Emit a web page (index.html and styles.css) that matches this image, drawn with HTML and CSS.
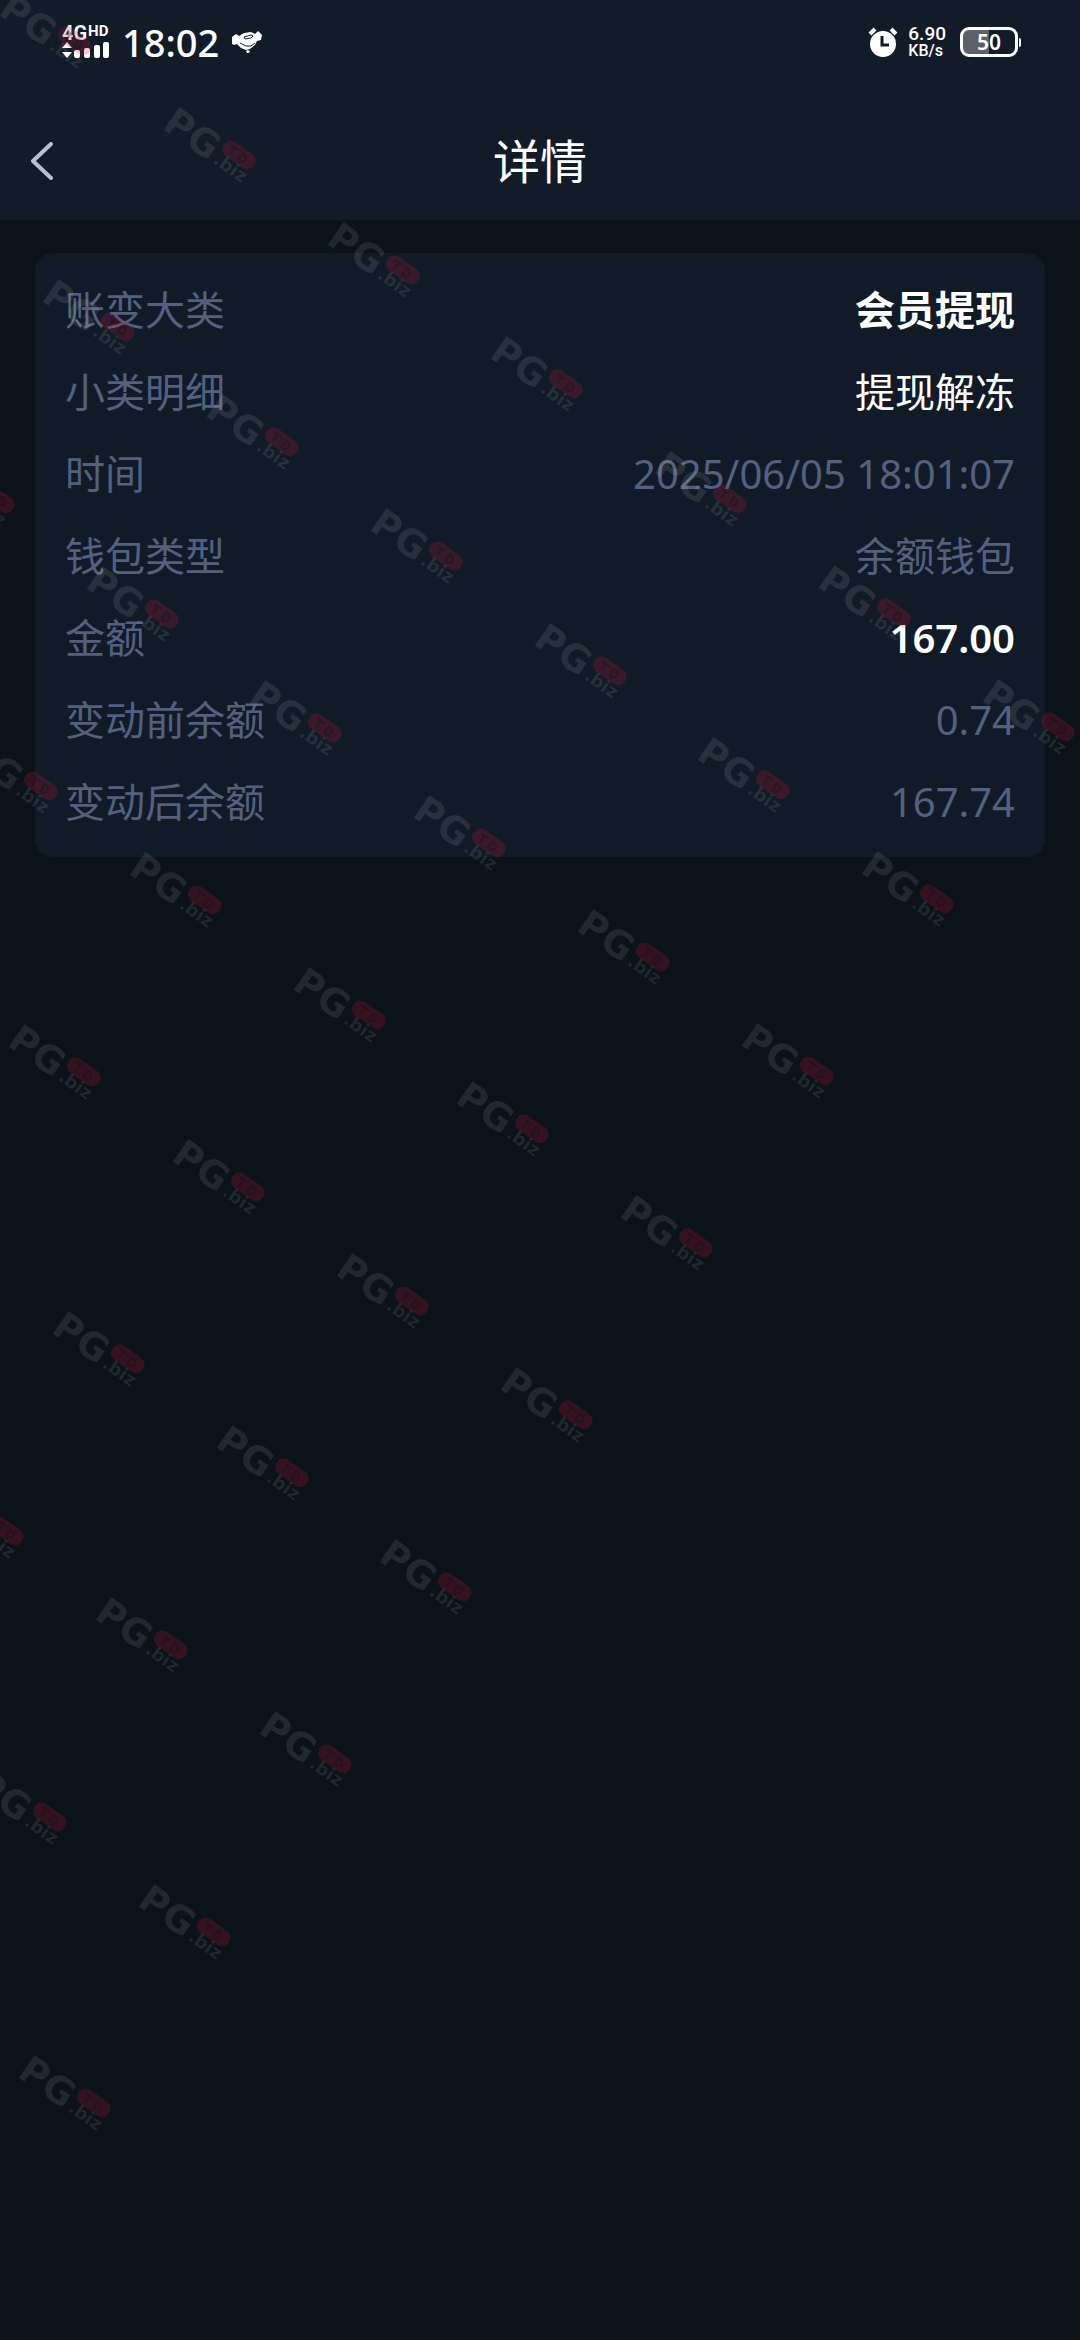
FILE: index.html
```html
<!DOCTYPE html>
<html lang="zh-CN">
<head>
<meta charset="UTF-8" />
<meta name="viewport" content="width=device-width, initial-scale=1" />
<title>详情</title>
<link rel="stylesheet" href="styles.css">
</head>
<body>
<div class="app">
  <header class="top">
    <div class="status-bar">
      <div class="status-left">
        <div class="network">
          <div class="network-type"><span class="gen">4G</span><span class="hd">HD</span></div>
          <svg class="signal" width="48" height="18" viewBox="0 0 48 18" fill="#fff" aria-hidden="true">
            <path d="M5 1l5 6H0zM5 17l5-6H0z"/>
            <rect x="12" y="9" width="6" height="8" rx="2"/>
            <rect x="22" y="7" width="6" height="10" rx="2"/>
            <rect x="32" y="4" width="6" height="13" rx="2"/>
            <rect x="41" y="1" width="6" height="16" rx="2"/>
          </svg>
        </div>
        <span class="clock">18:02</span>
        <svg class="notice" width="32" height="24" viewBox="0 0 32 24" aria-hidden="true">
          <path fill="#fff" d="M1 7l4-3 3 2 5-3 7-1 4 2 3-3 4 4-1 5-4 1-2 4-5 4-4 1-5-2-4-4-3 1-2-1z"/>
          <path fill="none" stroke="#121b28" stroke-width="1" d="M13 7l7-2 2 1-2 2-6 1zM9 13l6 3h5l4-3"/>
          <path fill="#fff" d="M15 21l2-1 2 1-1 2h-2z"/>
        </svg>
      </div>
      <div class="status-right">
        <svg width="30" height="30" viewBox="0 0 30 30" aria-hidden="true">
          <circle cx="15" cy="17" r="13" fill="#fff"/>
          <path d="M2 7l5-5M28 7l-5-5" stroke="#fff" stroke-width="4" fill="none"/>
          <path d="M14 9v9h7" stroke="#121b28" stroke-width="3" fill="none"/>
        </svg>
        <div class="speed"><span class="rate">6.90</span><span class="unit">KB/s</span></div>
        <div class="battery"><span>50</span></div>
      </div>
    </div>
    <div class="nav">
      <button class="back" type="button" aria-label="返回">
        <svg width="24" height="38" viewBox="0 0 24 38" fill="none" stroke="#b6c0d0" stroke-width="4" stroke-linecap="round" stroke-linejoin="round">
          <path d="M21 2L3 19l18 17"/>
        </svg>
      </button>
      <h1>详情</h1>
    </div>
  </header>

  <main>
    <dl class="card">
      <div class="row"><dt>账变大类</dt><dd class="strong">会员提现</dd></div>
      <div class="row"><dt>小类明细</dt><dd class="light">提现解冻</dd></div>
      <div class="row"><dt>时间</dt><dd>2025/06/05 18:01:07</dd></div>
      <div class="row"><dt>钱包类型</dt><dd>余额钱包</dd></div>
      <div class="row"><dt>金额</dt><dd class="strong">167.00</dd></div>
      <div class="row"><dt>变动前余额</dt><dd>0.74</dd></div>
      <div class="row"><dt>变动后余额</dt><dd>167.74</dd></div>
    </dl>
  </main>
</div>

<!-- watermark over the whole page -->
<svg class="watermark" aria-hidden="true">
  <defs>
    <g id="mark">
      <g transform="translate(1 22) rotate(35)">
        <text class="mark-pg" x="-2" y="1">PG</text>
        <rect class="mark-pill" x="59" y="-30" width="37" height="17" rx="8"/>
        <path class="mark-cut" d="M66-25h9M70-25v8M80-25v8h3q6-4 0-8z"/>
        <text class="mark-biz" x="60" y="0">.biz</text>
      </g>
    </g>
  </defs>
  <use href="#mark" x="-2" y="-8"/>
  <use href="#mark" x="162" y="106"/>
  <use href="#mark" x="326" y="221"/>
  <use href="#mark" x="489" y="335"/>
  <use href="#mark" x="653" y="450"/>
  <use href="#mark" x="817" y="564"/>
  <use href="#mark" x="981" y="678"/>

  <use href="#mark" x="41" y="278"/>
  <use href="#mark" x="205" y="393"/>
  <use href="#mark" x="369" y="507"/>
  <use href="#mark" x="533" y="622"/>
  <use href="#mark" x="696" y="736"/>
  <use href="#mark" x="860" y="850"/>

  <use href="#mark" x="-79" y="450"/>
  <use href="#mark" x="85" y="565"/>
  <use href="#mark" x="248" y="679"/>
  <use href="#mark" x="412" y="794"/>
  <use href="#mark" x="576" y="908"/>
  <use href="#mark" x="740" y="1022"/>

  <use href="#mark" x="-36" y="737"/>
  <use href="#mark" x="128" y="851"/>
  <use href="#mark" x="292" y="966"/>
  <use href="#mark" x="455" y="1080"/>
  <use href="#mark" x="619" y="1194"/>

  <use href="#mark" x="7" y="1023"/>
  <use href="#mark" x="171" y="1138"/>
  <use href="#mark" x="335" y="1252"/>
  <use href="#mark" x="499" y="1366"/>

  <use href="#mark" x="51" y="1310"/>
  <use href="#mark" x="215" y="1424"/>
  <use href="#mark" x="378" y="1538"/>

  <use href="#mark" x="-70" y="1482"/>
  <use href="#mark" x="94" y="1596"/>
  <use href="#mark" x="258" y="1710"/>

  <use href="#mark" x="-27" y="1768"/>
  <use href="#mark" x="137" y="1883"/>
  <use href="#mark" x="17" y="2054"/>
</svg>
</body>
</html>
```
FILE: styles.css
```css
* {
  box-sizing: border-box;
}
body {
  margin: 0;
  font-family: 'Noto Sans', 'Noto Sans CJK SC', sans-serif;
  background: #0b121a;
  color: #fff;
}
.app {
  min-height: 100vh;
}
.top {
  background: #121b28;
}

/* status bar */
.status-bar {
  display: flex;
  justify-content: space-between;
  align-items: center;
  height: 84px;
  padding: 0 62px;
}
.status-left, .status-right {
  display: flex;
  align-items: center;
}
.status-left {
  gap: 12px;
}
.status-right {
  gap: 10px;
}
.network {
  display: flex;
  flex-direction: column;
}
.network-type {
  display: flex;
  align-items: flex-start;
  gap: 1px;
  height: 16px;
  font-family: Roboto, sans-serif;
  font-weight: 700;
}
.gen {
  font-size: 20px;
  line-height: 16px;
}
.hd {
  font-size: 15px;
  line-height: 12px;
}
.signal {
  display: block;
}
.clock {
  font-size: 38px;
  line-height: 40px;
  font-weight: 500;
}
.speed {
  display: flex;
  flex-direction: column;
  font-family: Roboto, sans-serif;
  font-weight: 500;
}
.rate {
  font-size: 19px;
  line-height: 18px;
}
.unit {
  font-size: 16px;
  line-height: 16px;
}
.battery {
  position: relative;
  width: 58px;
  height: 30px;
  margin-left: 4px;
  border: 3px solid #fff;
  border-radius: 9px;
  background: linear-gradient(90deg, #5c6169 50%, transparent 50%);
  font-size: 21px;
  line-height: 24px;
  font-weight: 600;
  text-align: center;
}
.battery::after {
  content: "";
  position: absolute;
  top: 8px;
  right: -6px;
  width: 2px;
  height: 9px;
  border-radius: 0 2px 2px 0;
  background: #fff;
}

/* title bar */
.nav {
  display: grid;
  grid-template-columns: 1fr auto 1fr;
  align-items: center;
  height: 136px;
  padding: 18px 30px 0;
}
.back {
  display: flex;
  justify-self: start;
  padding: 0;
  border: none;
  background: none;
  cursor: pointer;
}
.nav h1 {
  margin: 0;
  font-size: 47px;
  line-height: 64px;
  font-weight: 400;
}

/* detail card */
main {
  padding: 33px 35px;
}
.card {
  margin: 0;
  padding: 16px 30px 14px;
  border-radius: 18px;
  background: #111b28;
}
.row {
  display: flex;
  justify-content: space-between;
  align-items: center;
  height: 82px;
  font-size: 40px;
  line-height: 56px;
  color: #53617f;
}
.row dt {
  font-weight: 400;
}
.row dd {
  margin: 0;
}
.row .strong, .row .light {
  color: #fff;
}
.row .strong {
  font-weight: 600;
}

.watermark {
  position: absolute;
  top: 0;
  left: 0;
  width: 100%;
  height: 100%;
  pointer-events: none;
}
.mark-pg, .mark-biz {
  font-family: 'DejaVu Sans', sans-serif;
  font-weight: 700;
  fill: rgba(255, 255, 255, 0.09);
}
.mark-pg {
  font-size: 38px;
}
.mark-biz {
  font-size: 18px;
}
.mark-pill {
  fill: rgba(200, 20, 50, 0.22);
}
.mark-cut {
  fill: none;
  stroke: rgba(11, 18, 26, 0.3);
  stroke-width: 2;
}
```
